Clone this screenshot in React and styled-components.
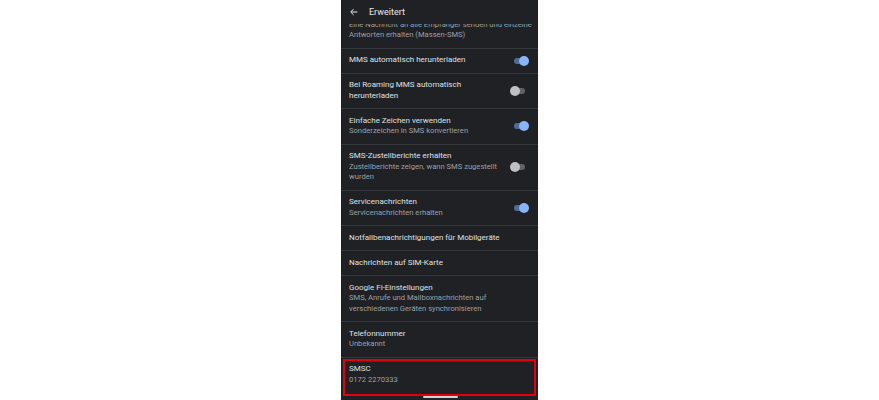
import React from "react";
import styled, { createGlobalStyle } from "styled-components";

const GlobalStyle = createGlobalStyle`
  html, body { margin: 0; padding: 0; background: #ffffff; }
  body { font-family: Roboto, "Noto Sans", Arial, sans-serif; }
`;

const Page = styled.div`
  display: flex;
  justify-content: center;
  height: 400px;
  overflow: hidden;
`;

const Phone = styled.div`
  position: relative;
  width: 197px;
  height: 400px;
  background: #202124;
  overflow: hidden;
`;

const Header = styled.div`
  position: absolute;
  top: 0;
  left: 0;
  right: 0;
  height: 24px;
  display: flex;
  align-items: center;
  gap: 10px;
  padding-left: 8px;
  background: #202124;
  color: #e8eaed;
  font-size: 9px;
  z-index: 2;
`;

const List = styled.div`
  padding-top: 2.5px;
`;

const Row = styled.div`
  position: relative;
  display: flex;
  align-items: center;
  padding: 6.75px 10px 6.75px 8px;
  border-bottom: ${(p) => (p.$last ? "none" : "1px solid #34363a")};

  ${(p) =>
    p.$marked &&
    `
    &::after {
      content: "";
      position: absolute;
      left: 2px;
      right: 2px;
      top: 1px;
      bottom: -4px;
      border: 2.5px solid #e3000f;
      pointer-events: none;
    }
  `}
`;

const Texts = styled.div`
  flex: 1;
  min-width: 0;
  padding-right: ${(p) => (p.$withToggle ? "12px" : "0")};
  white-space: nowrap;
`;

const Title = styled.div`
  font-size: 8px;
  line-height: 10.5px;
  color: #dfe1e4;
`;

const Sub = styled.div`
  font-size: 7.6px;
  line-height: 10.5px;
  color: #9aa0a6;
`;

const Track = styled.div`
  position: relative;
  width: 13px;
  height: 6px;
  border-radius: 3px;
  background: ${(p) => (p.$on ? "#4f6b9c" : "#5f6368")};
  margin-right: ${(p) => (p.$on ? "1px" : "3px")};
`;

const Thumb = styled.div`
  position: absolute;
  top: -2px;
  ${(p) => (p.$on ? "right: -2px;" : "left: -2px;")}
  width: 10px;
  height: 10px;
  border-radius: 50%;
  background: ${(p) => (p.$on ? "#8ab4f8" : "#bdc1c6")};
`;

const HomeBar = styled.div`
  position: absolute;
  left: 50%;
  bottom: 2px;
  width: 35px;
  height: 2px;
  margin-left: -17px;
  border-radius: 1px;
  background: #d0d0d0;
`;

const Toggle = ({ on }) => (
  <Track $on={on}>
    <Thumb $on={on} />
  </Track>
);

const rows = [
  {
    title: "Gruppennachrichten",
    sub: ["Eine Nachricht an alle Empfänger senden und einzelne", "Antworten erhalten (Massen-SMS)"],
  },
  { title: "MMS automatisch herunterladen", toggle: true },
  { title: ["Bei Roaming MMS automatisch", "herunterladen"], toggle: false },
  { title: "Einfache Zeichen verwenden", sub: ["Sonderzeichen in SMS konvertieren"], toggle: true },
  {
    title: "SMS-Zustellberichte erhalten",
    sub: ["Zustellberichte zeigen, wann SMS zugestellt", "wurden"],
    toggle: false,
  },
  { title: "Servicenachrichten", sub: ["Servicenachrichten erhalten"], toggle: true },
  { title: "Notfallbenachrichtigungen für Mobilgeräte" },
  { title: "Nachrichten auf SIM-Karte" },
  {
    title: "Google Fi-Einstellungen",
    sub: ["SMS, Anrufe und Mailboxnachrichten auf", "verschiedenen Geräten synchronisieren"],
  },
  { title: "Telefonnummer", sub: ["Unbekannt"] },
  { title: "SMSC", sub: ["0172 2270333"], marked: true },
];

export default function App() {
  return (
    <>
      <GlobalStyle />
      <Page>
        <Phone>
          <Header>
            <svg width="10" height="10" viewBox="0 0 24 24" fill="none" stroke="#e8eaed" strokeWidth="2.4">
              <path d="M20 12H5M11 5l-7 7 7 7" />
            </svg>
            <span>Erweitert</span>
          </Header>
          <List>
            {rows.map((r, i) => (
              <Row key={i} $last={i === rows.length - 1} $marked={r.marked}>
                <Texts $withToggle={r.toggle !== undefined}>
                  {[].concat(r.title).map((t, j) => (
                    <Title key={j}>{t}</Title>
                  ))}
                  {(r.sub || []).map((s, j) => (
                    <Sub key={j}>{s}</Sub>
                  ))}
                </Texts>
                {r.toggle !== undefined && <Toggle on={r.toggle} />}
              </Row>
            ))}
          </List>
          <HomeBar />
        </Phone>
      </Page>
    </>
  );
}
